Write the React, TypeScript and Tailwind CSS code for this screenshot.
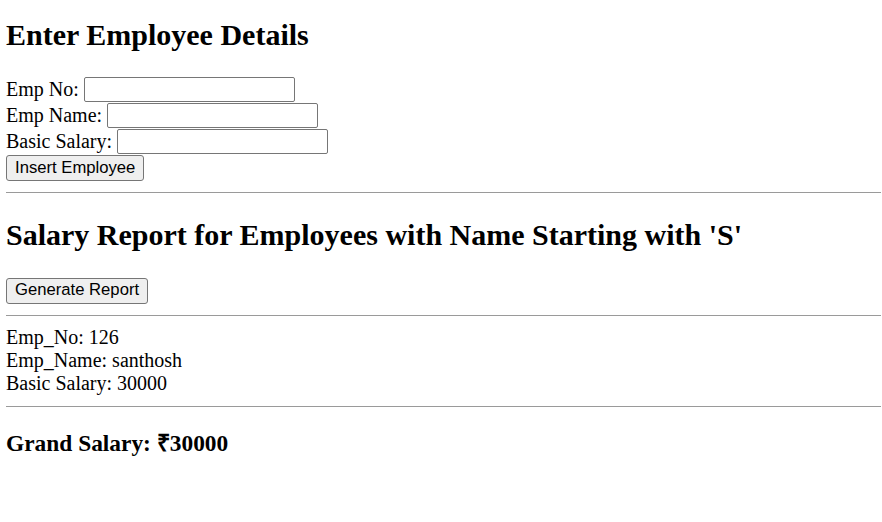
import React, { useState } from "react";

type Emp = { no: string; name: string; salary: number };

export default function App() {
  const [empNo, setEmpNo] = useState("");
  const [empName, setEmpName] = useState("");
  const [salary, setSalary] = useState("");
  const [rows, setRows] = useState<Emp[]>([{ no: "126", name: "santhosh", salary: 30000 }]);
  const [shown, setShown] = useState(true);

  const insert = () => {
    if (!empNo || !empName) return;
    setRows([...rows, { no: empNo, name: empName, salary: parseFloat(salary) || 0 }]);
    setEmpNo(""); setEmpName(""); setSalary("");
  };

  const report = rows.filter((r) => r.name.toLowerCase().startsWith("s"));
  const total = report.reduce((s, r) => s + r.salary, 0);

  const field = (label: string, value: string, set: (v: string) => void) => (
    <div className="flex items-center h-[26.33px] gap-[5px]">
      <span>{label}</span>
      <input
        value={value}
        onChange={(e) => set(e.target.value)}
        className="w-[211px] h-[25px] border border-[#767676] rounded-[2px] bg-white px-[2px] outline-none"
      />
    </div>
  );

  const btn = "h-[26px] px-[8px] bg-[#efefef] border border-[#767676] rounded-[3px] font-['Liberation_Sans',Arial,sans-serif] text-[16.67px] leading-none text-black";

  return (
    <div className="min-h-[522px] bg-white text-black font-['Liberation_Serif','Times_New_Roman',serif] text-[20px] leading-[23px] pl-[6px] pr-[1px] pt-[18px]">
      <h2 className="text-[30px] leading-[34px] font-bold mb-[24px]">Enter Employee Details</h2>
      {field("Emp No:", empNo, setEmpNo)}
      {field("Emp Name:", empName, setEmpName)}
      {field("Basic Salary:", salary, setSalary)}
      <button onClick={insert} className={btn}>Insert Employee</button>
      <hr className="mt-[11px] border-t border-[#9a9a9a]" />

      <h2 className="text-[30px] leading-[34px] font-bold mt-[25px] mb-[25px]">
        Salary Report for Employees with Name Starting with 'S'
      </h2>
      <button onClick={() => setShown(true)} className={btn}>Generate Report</button>
      <hr className="mt-[11px] border-t border-[#9a9a9a]" />

      {shown && (
        <>
          {report.map((r) => (
            <div key={r.no} className="mt-[10px]">
              <div>Emp_No: {r.no}</div>
              <div>Emp_Name: {r.name}</div>
              <div>Basic Salary: {r.salary}</div>
            </div>
          ))}
          <hr className="mt-[11px] border-t border-[#9a9a9a]" />
          <h3 className="text-[23.4px] leading-[27px] font-bold mt-[23px]">Grand Salary: ₹{total}</h3>
        </>
      )}
    </div>
  );
}
